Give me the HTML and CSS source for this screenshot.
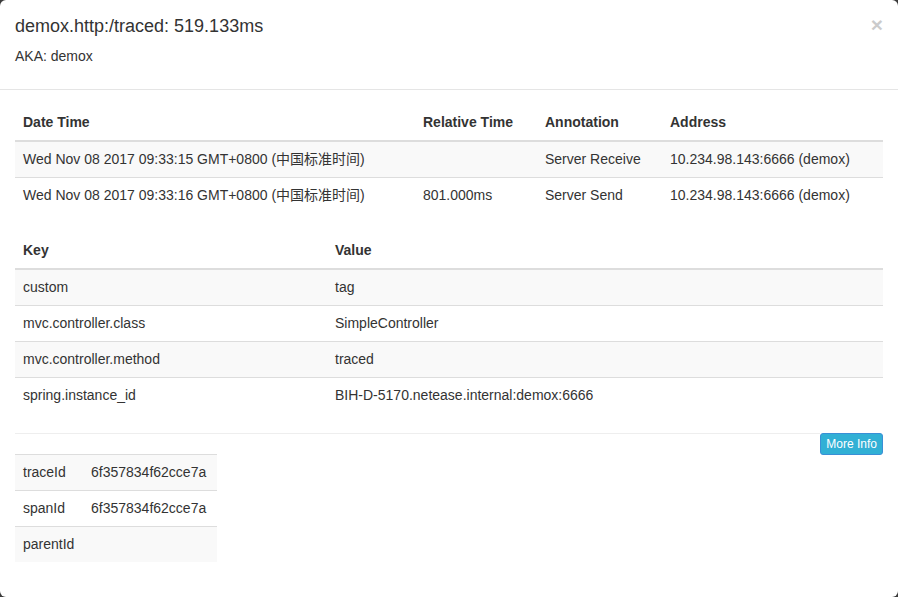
FILE: index.html
```html
<!DOCTYPE html>
<html>
<head>
<meta charset="utf-8">
<link rel="stylesheet" href="styles.css">
</head>
<body>
<div class="modal">
  <div class="modal-header">
    <button class="close" type="button">×</button>
    <h4 class="modal-title">demox.http:/traced: 519.133ms</h4>
    <p class="aka">AKA: demox</p>
  </div>
  <div class="modal-body">
    <table class="table annotations">
      <thead>
        <tr><th class="c1">Date Time</th><th class="c2">Relative Time</th><th class="c3">Annotation</th><th>Address</th></tr>
      </thead>
      <tbody>
        <tr><td>Wed Nov 08 2017 09:33:15 GMT+0800 (中国标准时间)</td><td></td><td>Server Receive</td><td>10.234.98.143:6666 (demox)</td></tr>
        <tr><td>Wed Nov 08 2017 09:33:16 GMT+0800 (中国标准时间)</td><td>801.000ms</td><td>Server Send</td><td>10.234.98.143:6666 (demox)</td></tr>
      </tbody>
    </table>
    <table class="table binary">
      <thead>
        <tr><th class="k">Key</th><th>Value</th></tr>
      </thead>
      <tbody>
        <tr><td>custom</td><td>tag</td></tr>
        <tr><td>mvc.controller.class</td><td>SimpleController</td></tr>
        <tr><td>mvc.controller.method</td><td>traced</td></tr>
        <tr><td>spring.instance_id</td><td>BIH-D-5170.netease.internal:demox:6666</td></tr>
      </tbody>
    </table>
    <div class="divider-row">
      <div class="rule"></div>
      <button class="btn-info" type="button">More Info</button>
    </div>
    <table class="table ids">
      <tbody>
        <tr><td>traceId</td><td>6f357834f62cce7a</td></tr>
        <tr><td>spanId</td><td>6f357834f62cce7a</td></tr>
        <tr><td>parentId</td><td></td></tr>
      </tbody>
    </table>
  </div>
</div>
</body>
</html>
```

FILE: styles.css
```css
html, body {
  margin: 0;
  padding: 0;
}
body {
  background: #3b3b3b;
  font-family: "Liberation Sans", Arial, "Noto Sans CJK SC", sans-serif;
  font-size: 14px;
  line-height: 20px;
  color: #333;
}
.modal {
  width: 898px;
  height: 597px;
  background: #fff;
  border-radius: 6px;
  overflow: hidden;
  box-sizing: border-box;
}
.modal-header {
  padding: 15px 15px 15px;
  border-bottom: 1px solid #e5e5e5;
  height: 90px;
  box-sizing: border-box;
}
.close {
  float: right;
  margin-top: -1px;
  padding: 0;
  border: 0;
  background: transparent;
  font-family: "Liberation Sans", Arial, sans-serif;
  font-size: 21px;
  font-weight: bold;
  line-height: 1;
  color: #000;
  opacity: 0.2;
}
.modal-title {
  margin: 0;
  font-size: 18px;
  font-weight: 500;
  line-height: 22px;
}
.aka {
  margin: 9px 0 0;
  font-size: 14px;
  line-height: 20px;
}
.modal-body {
  padding: 14px 15px 15px;
}
.table {
  border-collapse: collapse;
  border-spacing: 0;
  margin-bottom: 19px;
}
.annotations, .binary {
  width: 100%;
}
.table th {
  text-align: left;
  font-weight: bold;
  padding: 8px;
  line-height: 20px;
  border-bottom: 2px solid #ddd;
  vertical-align: bottom;
}
.table td {
  padding: 8px;
  line-height: 19px;
  border-top: 1px solid #ddd;
  vertical-align: top;
  white-space: nowrap;
}
.table thead + tbody tr:first-child td {
  border-top: 0;
}
.table tbody tr:nth-child(odd) td {
  background: #f9f9f9;
}
.annotations .c1 { width: 384px; }
.annotations .c2 { width: 106px; }
.annotations .c3 { width: 109px; }
.binary .k { width: 296px; }
.divider-row {
  display: flex;
  align-items: flex-start;
  padding-top: 1px;
  margin-bottom: -1px;
}
.rule {
  flex: 1;
  border-top: 1px solid #eee;
}
.btn-info {
  height: 22px;
  padding: 0 5px;
  border: 1px solid #3a8fd6;
  border-radius: 3px;
  background: #31b0d5;
  color: #fff;
  font-family: "Liberation Sans", Arial, sans-serif;
  font-size: 12px;
  line-height: 18px;
}
.ids {
  width: 202px;
}
.ids td:first-child {
  width: 52px;
}
```
